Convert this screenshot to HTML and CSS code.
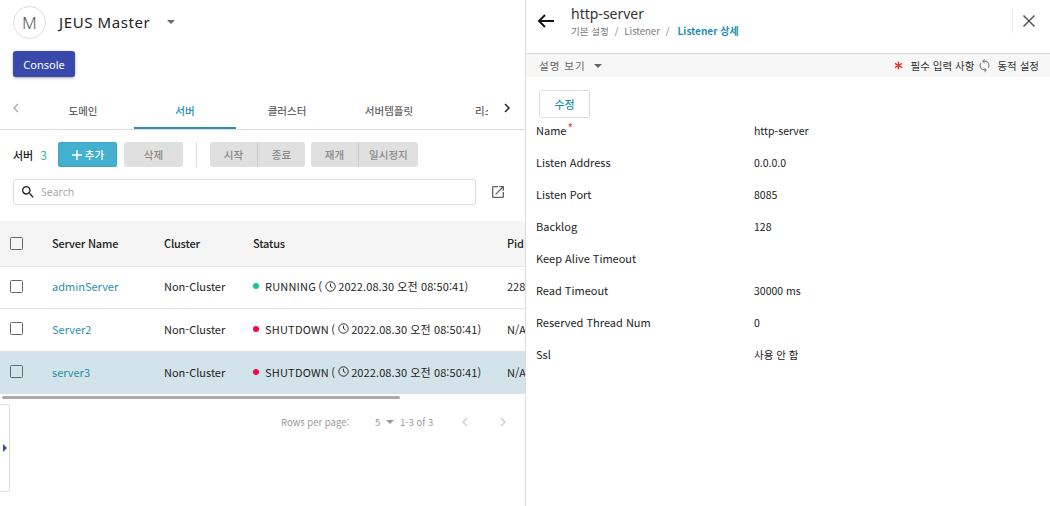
FILE: index.html
```html
<!DOCTYPE html>
<html lang="ko">
<head>
  <meta charset="UTF-8">
  <title>JEUS Master</title>
  <link rel="stylesheet" href="styles.css">
</head>
<body>
  <div class="left">
    <div class="master">
      <div class="avatar">M</div>
      <span class="master-name">JEUS Master</span>
      <span class="caret master-caret"></span>
    </div>
    <div class="console-row"><button class="console-btn">Console</button></div>

    <div class="tabs">
      <svg class="tab-arrow" width="24" height="24" viewBox="0 0 24 24"><path d="M14 8l-4 4 4 4" fill="none" stroke="#aaa" stroke-width="1.4"/></svg>
      <div class="tab-list">
        <div class="tab">도메인</div>
        <div class="tab active">서버</div>
        <div class="tab">클러스터</div>
        <div class="tab">서버템플릿</div>
        <div class="tab tab-cut"><span>리소스</span></div>
      </div>
      <svg class="tab-arrow" width="24" height="24" viewBox="0 0 24 24"><path d="M10 8l4 4-4 4" fill="none" stroke="#222" stroke-width="1.5"/></svg>
    </div>

    <div class="toolbar">
      <span class="count-label">서버</span>
      <span class="count">3</span>
      <button class="btn btn-add"><svg width="12" height="12" viewBox="0 0 12 12"><path d="M6 1v10M1 6h10" stroke="#fff" stroke-width="1.5"/></svg>추가</button>
      <button class="btn btn-off">삭제</button>
      <span class="divider"></span>
      <div class="btn-group"><button class="btn btn-off">시작</button><button class="btn btn-off">종료</button></div>
      <div class="btn-group"><button class="btn btn-off">재개</button><button class="btn btn-off btn-wide">일시정지</button></div>
    </div>

    <div class="search-row">
      <div class="search">
        <svg width="16" height="16" viewBox="0 0 24 24"><path d="M15.5 14h-.79l-.28-.27A6.47 6.47 0 0 0 16 9.5 6.5 6.5 0 1 0 9.5 16c1.61 0 3.09-.59 4.23-1.57l.27.28v.79l5 4.99L20.49 19l-4.99-5zm-6 0C7.01 14 5 11.99 5 9.5S7.01 5 9.5 5 14 7.01 14 9.5 11.99 14 9.5 14z" fill="#222"/></svg>
        <span class="placeholder">Search</span>
      </div>
      <svg class="export" width="16" height="16" viewBox="0 0 24 24"><path d="M19 19H5V5h7V3H5a2 2 0 0 0-2 2v14a2 2 0 0 0 2 2h14a2 2 0 0 0 2-2v-7h-2v7zM14 3v2h3.59l-9.83 9.83 1.41 1.41L19 6.41V10h2V3h-7z" fill="#666"/></svg>
    </div>

    <div class="table-wrap">
      <table class="servers">
        <thead>
          <tr>
            <th class="col-check"><span class="check"></span></th>
            <th class="col-name">Server Name</th>
            <th class="col-cluster">Cluster</th>
            <th class="col-status">Status</th>
            <th>Pid</th>
          </tr>
        </thead>
        <tbody>
          <tr>
            <td><span class="check"></span></td>
            <td><a class="link">adminServer</a></td>
            <td>Non-Cluster</td>
            <td><span class="status"><i class="dot dot-green"></i><span class="state">RUNNING (</span><svg class="clock" width="11" height="11" viewBox="0 0 14 14"><circle cx="7" cy="7" r="6" fill="none" stroke="#222" stroke-width="1.2"/><path d="M7 3.4V7l2.6 1.7" fill="none" stroke="#222" stroke-width="1.2"/></svg>2022.08.30 오전 08:50:41)</span></td>
            <td>228</td>
          </tr>
          <tr>
            <td><span class="check"></span></td>
            <td><a class="link">Server2</a></td>
            <td>Non-Cluster</td>
            <td><span class="status"><i class="dot dot-red"></i><span class="state">SHUTDOWN (</span><svg class="clock" width="11" height="11" viewBox="0 0 14 14"><circle cx="7" cy="7" r="6" fill="none" stroke="#222" stroke-width="1.2"/><path d="M7 3.4V7l2.6 1.7" fill="none" stroke="#222" stroke-width="1.2"/></svg>2022.08.30 오전 08:50:41)</span></td>
            <td>N/A</td>
          </tr>
          <tr class="selected">
            <td><span class="check"></span></td>
            <td><a class="link">server3</a></td>
            <td>Non-Cluster</td>
            <td><span class="status"><i class="dot dot-red"></i><span class="state">SHUTDOWN (</span><svg class="clock" width="11" height="11" viewBox="0 0 14 14"><circle cx="7" cy="7" r="6" fill="none" stroke="#222" stroke-width="1.2"/><path d="M7 3.4V7l2.6 1.7" fill="none" stroke="#222" stroke-width="1.2"/></svg>2022.08.30 오전 08:50:41)</span></td>
            <td>N/A</td>
          </tr>
        </tbody>
      </table>
    </div>
    <div class="scroll-track"><div class="scroll-thumb"></div></div>

    <div class="pager">
      <span class="rows-label">Rows per page:</span>
      <span class="rows-num">5</span>
      <span class="caret pager-caret"></span>
      <span class="range">1-3 of 3</span>
      <svg width="24" height="24" viewBox="0 0 24 24"><path d="M14 8l-4 4 4 4" fill="none" stroke="#ccc" stroke-width="1.4"/></svg>
      <svg class="pager-next" width="24" height="24" viewBox="0 0 24 24"><path d="M10 8l4 4-4 4" fill="none" stroke="#ccc" stroke-width="1.4"/></svg>
    </div>

    <div class="side-handle"><span class="handle-arrow"></span></div>
  </div>

  <div class="right">
    <div class="detail-head">
      <svg class="back" width="24" height="24" viewBox="0 0 24 24"><path d="M20 12H5.5M11 6l-6 6 6 6" fill="none" stroke="#111" stroke-width="1.9"/></svg>
      <div class="detail-title">
        <div class="title">http-server</div>
        <div class="crumbs"><span>기본 설정</span><span class="sep">/</span><span>Listener</span><span class="sep">/</span><span class="crumb-on">Listener 상세</span></div>
      </div>
      <div class="close-box">
        <svg width="24" height="24" viewBox="0 0 24 24"><path d="M6.5 6.5l11 11M17.5 6.5l-11 11" fill="none" stroke="#555" stroke-width="1.5"/></svg>
      </div>
    </div>

    <div class="sub-bar">
      <span class="desc">설명 보기</span>
      <span class="caret desc-caret"></span>
      <svg class="star" width="9" height="9" viewBox="0 0 10 10"><path d="M5 .5v9M1 2.6l8 4.8M9 2.6L1 7.4" stroke="#e53935" stroke-width="1.6"/></svg>
      <span class="legend">필수 입력 사항</span>
      <svg class="sync" width="15" height="15" viewBox="0 0 24 24"><path d="M12 4V1L8 5l4 4V6a6 6 0 0 1 6 6c0 1-.25 1.97-.7 2.8l1.46 1.46A7.93 7.93 0 0 0 20 12a8 8 0 0 0-8-8zm0 14a6 6 0 0 1-6-6c0-1 .25-1.97.7-2.8L5.24 7.74A7.93 7.93 0 0 0 4 12a8 8 0 0 0 8 8v3l4-4-4-4v3z" fill="#888"/></svg>
      <span class="legend">동적 설정</span>
    </div>

    <div class="detail-body">
      <button class="edit-btn">수정</button>
      <dl class="props">
        <div class="prop"><dt>Name<span class="req">*</span></dt><dd>http-server</dd></div>
        <div class="prop"><dt>Listen Address</dt><dd>0.0.0.0</dd></div>
        <div class="prop"><dt>Listen Port</dt><dd>8085</dd></div>
        <div class="prop"><dt>Backlog</dt><dd>128</dd></div>
        <div class="prop"><dt>Keep Alive Timeout</dt><dd></dd></div>
        <div class="prop"><dt>Read Timeout</dt><dd>30000 ms</dd></div>
        <div class="prop"><dt>Reserved Thread Num</dt><dd>0</dd></div>
        <div class="prop"><dt>Ssl</dt><dd>사용 안 함</dd></div>
      </dl>
    </div>
  </div>
</body>
</html>
```

FILE: styles.css
```css
html, body {
  margin: 0;
  padding: 0;
  height: 100%;
  overflow: hidden;
  background: #fff;
  font-family: "Noto Sans CJK KR", "Noto Sans", sans-serif;
  color: #222;
}

body {
  display: flex;
}

button {
  font-family: inherit;
  border: none;
  padding: 0;
}

.caret {
  display: inline-block;
  flex: none;
  width: 0;
  height: 0;
  border-left: 4px solid transparent;
  border-right: 4px solid transparent;
  border-top: 4px solid #666;
}

/* left panel */
.left {
  position: relative;
  width: 525px;
  flex: none;
  overflow: hidden;
}

.master {
  display: flex;
  align-items: center;
  height: 33px;
  margin: 6px 0 0 13px;
}

.avatar {
  width: 31px;
  height: 31px;
  border: 1px solid #ddd;
  border-radius: 50%;
  display: flex;
  align-items: center;
  justify-content: center;
  font-family: "Noto Sans", sans-serif;
  font-size: 17px;
  font-weight: 300;
  color: #555;
}

.master-name {
  margin-left: 13px;
  padding-bottom: 2px;
  font-family: "Noto Sans", sans-serif;
  font-size: 15px;
  letter-spacing: 0.6px;
  color: #222;
}

.master-caret {
  margin: 0 0 1px 17px;
}

.console-row {
  margin: 12px 0 0 13px;
}

.console-btn {
  display: block;
  width: 62px;
  height: 26px;
  border-radius: 3px;
  background: #3949ab;
  color: #fff;
  font-family: "Noto Sans", sans-serif;
  font-size: 11px;
  box-shadow: 0 1px 3px rgba(0, 0, 0, 0.35);
}

.tabs {
  display: flex;
  align-items: center;
  height: 39px;
  margin-top: 13px;
  border-bottom: 1px solid #ddd;
}

.tab-arrow {
  flex: none;
  width: 24px;
  margin-top: -3px;
}

.tabs .tab-arrow:first-child {
  margin-left: 4px;
}

.tab-list {
  display: flex;
  flex: none;
  width: 456px;
  height: 39px;
  margin: 0 7px 0 4px;
  overflow: hidden;
}

.tab {
  flex: none;
  width: 102px;
  padding-top: 1px;
  line-height: 39px;
  text-align: center;
  font-size: 10.5px;
  font-weight: 500;
  color: #666;
  box-sizing: border-box;
}

.tab.active {
  color: #1f8fb0;
  border-bottom: 2px solid #2f8fa8;
}

.tab-cut {
  width: 48px;
  overflow: hidden;
  text-align: left;
  white-space: nowrap;
}

.tab-cut span {
  margin-left: 35px;
}

.toolbar {
  display: flex;
  align-items: center;
  height: 25px;
  margin: 12px 0 0 13px;
}

.count-label {
  font-size: 11px;
  font-weight: 500;
  color: #222;
}

.count {
  margin-left: 7px;
  font-size: 12px;
  color: #26b9a0;
}

.btn {
  width: 59px;
  height: 25px;
  border-radius: 3px;
  font-size: 10.5px;
  font-weight: 500;
}

.btn-add {
  margin-left: 11px;
  display: flex;
  align-items: center;
  justify-content: center;
  gap: 2px;
  background: #43b0cf;
  color: #fff;
  box-shadow: 0 0 0 1px #3fa5c4 inset;
}

.btn-off {
  background: #e0e0e0;
  color: #8a8a8a;
}

.btn-add + .btn-off {
  margin-left: 7px;
}

.divider {
  width: 1px;
  height: 25px;
  margin: 0 13px;
  background: #ddd;
}

.btn-group {
  display: flex;
  margin-right: 6px;
}

.btn-group .btn {
  width: 47px;
  border-radius: 0;
}

.btn-group .btn:first-child {
  border-radius: 3px 0 0 3px;
  border-right: 1px solid #c8c8c8;
  width: 48px;
}

.btn-group .btn:last-child {
  border-radius: 0 3px 3px 0;
}

.btn-group .btn-wide {
  width: 59px;
}

.search-row {
  display: flex;
  align-items: center;
  margin: 12px 0 0 13px;
}

.search {
  display: flex;
  align-items: center;
  width: 463px;
  height: 26px;
  border: 1px solid #ddd;
  border-radius: 3px;
  box-sizing: border-box;
  padding-left: 6px;
}

.placeholder {
  margin-left: 5px;
  font-family: "Noto Sans", sans-serif;
  font-size: 10.5px;
  color: #aaa;
}

.export {
  margin-left: 14px;
}

.table-wrap {
  margin-top: 16px;
  overflow: hidden;
}

.servers {
  width: 560px;
  table-layout: fixed;
  border-collapse: collapse;
  font-size: 11px;
}

.col-check { width: 52px; }
.col-name { width: 112px; }
.col-cluster { width: 89px; }
.col-status { width: 254px; }

.servers th {
  box-sizing: border-box;
  height: 45px;
  padding: 0;
  text-align: left;
  font-weight: 500;
  letter-spacing: -0.2px;
  background: #f5f5f5;
  border-bottom: 1px solid #e8e8e8;
}

.servers td {
  box-sizing: border-box;
  height: 42px;
  padding: 0 0 2px;
  border-bottom: 1px solid #e0e0e0;
  white-space: nowrap;
}

.servers tr + tr td {
  height: 43px;
}

.servers tr.selected td {
  background: #d2e4ea;
  border-bottom: none;
}

.check {
  display: block;
  width: 11px;
  height: 11px;
  margin-left: 10px;
  border: 1.5px solid #666;
  border-radius: 1.5px;
}

.link {
  color: #1f8fb0;
}

.status {
  display: flex;
  align-items: center;
  letter-spacing: 0.1px;
}

.state {
  letter-spacing: 0.2px;
  word-spacing: -1px;
}

.dot {
  flex: none;
  width: 6px;
  height: 6px;
  border-radius: 50%;
  margin-right: 6px;
}

.dot-green { background: #10c98a; }
.dot-red { background: #f0094f; }

.clock {
  flex: none;
  margin: 0 2px 0 3px;
}

.scroll-track {
  height: 4px;
  margin-top: 2px;
}

.scroll-thumb {
  width: 398px;
  height: 3px;
  margin-left: 2px;
  border-radius: 2px;
  background: #aaa;
}

.pager {
  display: flex;
  align-items: center;
  height: 24px;
  margin: 10px 0 0 281px;
  font-size: 9.5px;
  color: #999;
  white-space: nowrap;
}

.rows-label {
  flex: none;
  width: 94px;
}

.rows-num {
  flex: none;
  width: 6px;
}

.pager-caret {
  margin-left: 5px;
  border-top-color: #999;
}

.range {
  flex: none;
  width: 34px;
  margin: 0 19px 0 6px;
}

.pager svg {
  flex: none;
}

.pager-next {
  margin-left: 14px;
}

.side-handle {
  position: absolute;
  left: -1px;
  top: 404px;
  width: 9px;
  height: 86px;
  border: 1px solid #ddd;
  border-radius: 0 3px 3px 0;
  display: flex;
  align-items: center;
}

.handle-arrow {
  margin-left: 3px;
  border-top: 4px solid transparent;
  border-bottom: 4px solid transparent;
  border-left: 4px solid #3949ab;
}

/* right panel */
.right {
  flex: 1;
  border-left: 1px solid #ddd;
  display: flex;
  flex-direction: column;
}

.detail-head {
  display: flex;
  align-items: center;
  height: 54px;
  flex: none;
  box-sizing: border-box;
  border-bottom: 1px solid #d5d5d5;
  box-shadow: 0 1px 1px rgba(0, 0, 0, 0.08);
}

.back {
  margin: -12px 0 0 8px;
  flex: none;
}

.detail-title {
  margin: -10px 0 0 13px;
  flex: 1;
}

.title {
  font-family: "Noto Sans", sans-serif;
  font-size: 14px;
  line-height: 19px;
  color: #333;
}

.crumbs {
  font-size: 9.5px;
  line-height: 16px;
  color: #777;
}

.sep {
  margin: 0 6px;
}

.crumb-on {
  margin-left: 2px;
  color: #1f8fb0;
  font-size: 10px;
  font-weight: 700;
}

.close-box {
  box-sizing: border-box;
  width: 32px;
  height: 25px;
  margin: -12px 6px 0 0;
  border-left: 1px solid #eee;
  display: flex;
  align-items: center;
  justify-content: center;
}

.sub-bar {
  display: flex;
  align-items: center;
  flex: none;
  height: 23px;
  padding: 0 11px 0 13px;
  background: #f7f7f7;
  font-size: 10.5px;
  color: #555;
}

.desc {
  letter-spacing: 1px;
  color: #666;
}

.desc-caret {
  margin-left: 8px;
  margin-right: auto;
}

.legend {
  color: #333;
}

.star {
  margin-right: 8px;
}

.sync {
  margin: 0 5px 0 3px;
}

.detail-body {
  padding: 13px 0 0 13px;
}

.edit-btn {
  display: block;
  width: 51px;
  height: 28px;
  background: #fff;
  border: 1px solid #ddd;
  border-radius: 3px;
  color: #1f8fb0;
  font-size: 11px;
  font-weight: 500;
}

.props {
  margin: -4px 0 0 -3px;
}

.prop {
  display: flex;
  align-items: center;
  height: 32px;
  font-size: 11px;
  color: #222;
}

.prop dt {
  width: 218px;
}

.prop dd {
  margin: 0;
  font-size: 10.5px;
}

.req {
  color: #e53935;
  font-size: 12px;
  line-height: 0;
  margin-left: 1px;
  vertical-align: 2px;
}
```
